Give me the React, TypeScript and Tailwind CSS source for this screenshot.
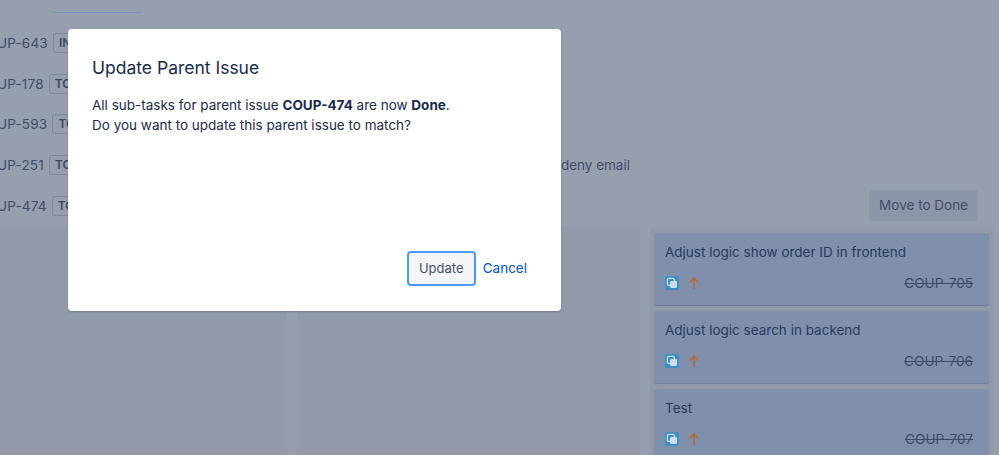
const rows = [
  { key: "UP-643", tag: "IN", ml: "ml-[5px]" },
  { key: "UP-178", tag: "TO", ml: "ml-[5px]" },
  { key: "UP-593", tag: "TO", ml: "ml-[5px]" },
  { key: "UP-251", tag: "TO", ml: "ml-[5px]" },
  { key: "UP-474", tag: "TO", ml: "ml-[5px]" },
];

const cards = [
  { title: "Adjust logic show order ID in frontend", id: "COUP-705" },
  { title: "Adjust logic search in backend", id: "COUP-706" },
  { title: "Test", id: "COUP-707" },
];

const SubtaskIcon = () => (
  <svg width="14" height="14" viewBox="0 0 14 14" className="shrink-0">
    <rect width="14" height="14" rx="2" fill="#3b8fc4" />
    <rect x="2.4" y="2.4" width="7" height="7" rx="1.4" fill="none" stroke="#cfdde9" strokeWidth="1.3" />
    <rect x="5" y="5" width="7" height="7" rx="1.4" fill="#cfdde9" />
  </svg>
);

const UpArrow = () => (
  <svg width="12" height="14" viewBox="0 0 12 14" className="shrink-0" fill="none" stroke="#b4683c" strokeWidth="1.7">
    <path d="M6 13V2" />
    <path d="M1.5 6.5L6 2l4.5 4.5" />
  </svg>
);

const Card = ({ title, id }: { title: string; id: string }) => (
  <div className="h-[72px] rounded-[3px] bg-[#8090ac] shadow-[0_1px_1px_#6f7c97] px-[11px] pt-[9px] pb-2 flex flex-col justify-between shrink-0">
    <p className="text-[13.5px] leading-5 text-[#2b3a5b]">{title}</p>
    <div className="flex items-center gap-[9px] mr-[5px] mb-[4px]">
      <SubtaskIcon />
      <UpArrow />
      <span className="ml-auto text-[13.6px] leading-5 text-[#3d4a66] line-through">{id}</span>
    </div>
  </div>
);

export default function App() {
  return (
    <div
      className="relative w-[999px] h-[455px] overflow-hidden bg-[#979fae] text-[13.5px] text-[#3f4d6a]"
      style={{ fontFamily: "Inter, 'Liberation Sans', sans-serif" }}
    >
      <div className="ml-[52px] w-[91px] h-[13px] rounded-b-[3px] border-b border-[#7391bf]" />

      <div className="mt-[10px] flex flex-col -ml-[3px]">
        {rows.map((row, i) => (
          <div key={row.key} className="flex items-center h-[40.6px]">
            <span className="tracking-[0.2px]">{row.key}</span>
            <span className={`${row.ml} h-[20px] px-[5px] rounded-[3px] border border-[#7f889b] text-[12px] leading-[18px] font-semibold text-[#3a4763]`}>
              {row.tag}
            </span>
            {i === 3 && <span className="ml-auto mr-[369px]">deny email</span>}
            {i === 4 && (
              <span className="ml-auto mr-[21px] h-[31px] px-[10px] rounded-[3px] bg-[#8d96a8] leading-[31px]">
                Move to Done
              </span>
            )}
          </div>
        ))}
      </div>

      <div className="mt-[1px] flex gap-[10px] h-[240px]">
        <div className="w-[287px] shrink-0 rounded-[3px] bg-[#929aa9]" />
        <div className="w-[343px] shrink-0 rounded-[3px] bg-[#929aa9]" />
        <div className="w-[343px] shrink-0 rounded-[3px] bg-[#929aa9] px-[4px] pt-[6px] flex flex-col gap-[6px]">
          {cards.map((c) => (
            <Card key={c.id} {...c} />
          ))}
        </div>
      </div>

      <div className="absolute left-[68px] top-[29px] w-[493px] h-[282px] rounded-[4px] bg-white flex flex-col px-[24px] pt-[25px] pb-[25px] shadow-[0_1px_2px_rgba(9,30,66,0.25)]">
        <h1 className="text-[17.5px] leading-[28px] text-[#172b4d]">Update Parent Issue</h1>
        <p className="mt-[13px] text-[13.5px] leading-5 text-[#172b4d]">
          All sub-tasks for parent issue <strong className="font-bold">COUP-474</strong> are now{" "}
          <strong className="font-bold">Done</strong>.
          <br />
          Do you want to update this parent issue to match?
        </p>
        <div className="mt-auto flex items-center justify-end gap-[7px] pr-[10px]">
          <button className="h-[35px] w-[69px] rounded-[4px] border-2 border-[#4c9aff] bg-[#f4f5f7] text-[13px] text-[#42526e]">
            Update
          </button>
          <button className="text-[13.5px] text-[#0052cc]">Cancel</button>
        </div>
      </div>
    </div>
  );
}
